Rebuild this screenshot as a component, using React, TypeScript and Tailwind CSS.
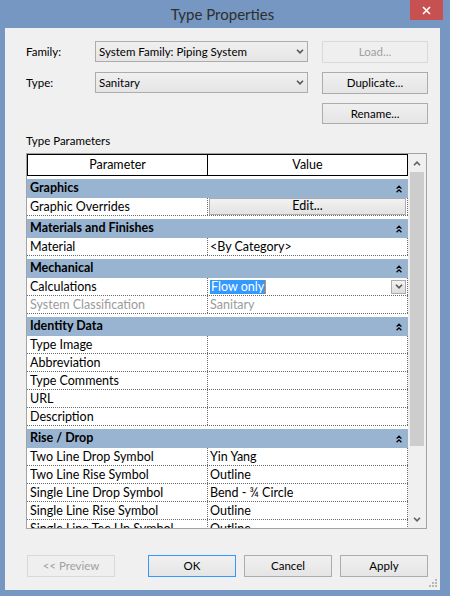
import React from "react";

type Row = { p: string; v?: string; kind?: "button" | "select"; muted?: boolean };
type Group = { name: string; rows: Row[] };

const groups: Group[] = [
  { name: "Graphics", rows: [{ p: "Graphic Overrides", v: "Edit...", kind: "button" }] },
  { name: "Materials and Finishes", rows: [{ p: "Material", v: "<By Category>" }] },
  {
    name: "Mechanical",
    rows: [
      { p: "Calculations", v: "Flow only", kind: "select" },
      { p: "System Classification", v: "Sanitary", muted: true },
    ],
  },
  {
    name: "Identity Data",
    rows: [{ p: "Type Image" }, { p: "Abbreviation" }, { p: "Type Comments" }, { p: "URL" }, { p: "Description" }],
  },
  {
    name: "Rise / Drop",
    rows: [
      { p: "Two Line Drop Symbol", v: "Yin Yang" },
      { p: "Two Line Rise Symbol", v: "Outline" },
      { p: "Single Line Drop Symbol", v: "Bend - ¾ Circle" },
      { p: "Single Line Rise Symbol", v: "Outline" },
      { p: "Single Line Tee Up Symbol", v: "Outline" },
    ],
  },
];

const ChevronDown = ({ className = "" }: { className?: string }) => (
  <svg width="8" height="5" viewBox="0 0 8 5" className={className}>
    <path d="M1 0.8 L4 3.8 L7 0.8" fill="none" stroke="currentColor" strokeWidth="1.6" />
  </svg>
);

const ChevronUp = ({ className = "" }: { className?: string }) => (
  <svg width="8" height="5" viewBox="0 0 8 5" className={className}>
    <path d="M1 4.2 L4 1.2 L7 4.2" fill="none" stroke="currentColor" strokeWidth="1.6" />
  </svg>
);

const Collapse = () => (
  <svg width="6" height="8" viewBox="0 0 6 8">
    <path d="M0.6 3.6 L3 1.2 L5.4 3.6 M0.6 7.2 L3 4.8 L5.4 7.2" fill="none" stroke="#000" strokeWidth="1.3" />
  </svg>
);

function Button({ label, size, state = "normal" }: { label: string; size: string; state?: "normal" | "disabled" | "focused" }) {
  const look =
    state === "disabled"
      ? "border-[#d9d9d9] bg-[#efefef] text-[#a0a0a0]"
      : state === "focused"
      ? "border-[#3399ff] bg-linear-to-b from-[#f0f0f0] to-[#e5e5e5] text-black"
      : "border-[#acacac] bg-linear-to-b from-[#f0f0f0] to-[#e5e5e5] text-black";
  return <div className={`flex items-center justify-center border text-[11.5px] ${size} ${look}`}>{label}</div>;
}

function Combo({ value }: { value: string }) {
  return (
    <div className="flex h-[21px] w-[213px] items-center justify-between border border-[#acacac] bg-linear-to-b from-[#f0f0f0] to-[#e5e5e5] pl-[3px] pr-[3px] text-[11.5px] text-black">
      <span>{value}</span>
      <ChevronDown className="text-[#555]" />
    </div>
  );
}

function DataRow({ row }: { row: Row }) {
  return (
    <div className="flex h-[18px] border-b border-dotted border-[#6a6a6a]">
      <div className={`w-[181px] shrink-0 border-r border-dotted border-[#6a6a6a] pl-[3px] leading-[17px] ${row.muted ? "text-[#9b9b9b]" : "text-black"}`}>
        {row.p}
      </div>
      <div className="flex min-w-0 flex-1 items-center border-r border-dotted border-[#6a6a6a]">
        {row.kind === "button" && (
          <div className="mx-[1px] flex h-[17px] flex-1 items-center justify-center border border-[#acacac] bg-linear-to-b from-[#f2f2f2] to-[#e3e3e3]">
            {row.v}
          </div>
        )}
        {row.kind === "select" && (
          <div className="flex h-full flex-1 items-center pl-[2px] pr-[1px]">
            <span className="bg-[#3399ff] px-[1px] leading-[14px] text-white">{row.v}</span>
            <span className="h-[14px] w-[1px] bg-[#e08a2c]" />
            <div className="ml-auto flex h-[14px] w-[15px] items-center justify-center border border-[#acacac] bg-linear-to-b from-[#f2f2f2] to-[#dedede]">
              <ChevronDown className="text-[#555]" />
            </div>
          </div>
        )}
        {!row.kind && row.v && (
          <span className={`pl-[2px] leading-[17px] ${row.muted ? "text-[#9b9b9b]" : "text-black"}`}>{row.v}</span>
        )}
      </div>
    </div>
  );
}

export default function App() {
  return (
    <div className="relative flex h-[596px] w-[450px] flex-col overflow-hidden bg-[#7597c1] font-['Lato','Liberation_Sans',sans-serif]">
      {/* title bar */}
      <div className="flex h-[28px] shrink-0 items-center justify-center pr-[5px] text-[15px] text-[#2e2e2e]">Type Properties</div>
      <div className="absolute right-[7px] top-0 flex h-[20px] w-[33px] items-center justify-center bg-[#c75050]">
        <svg width="9" height="9" viewBox="0 0 9 9">
          <path d="M1 1 L8 8 M8 1 L1 8" stroke="#fff" strokeWidth="1.6" />
        </svg>
      </div>

      {/* client area */}
      <div className="relative ml-[5px] flex h-[562px] w-[435px] flex-col bg-[#f0f0f0] pl-[21px] pr-[12px] text-[11.5px] text-black">
        <div className="mt-[13px] flex items-start">
          <div className="w-[69px] pt-[2px]">Family:</div>
          <Combo value="System Family: Piping System" />
          <div className="ml-auto">
            <Button label="Load..." size="h-[22px] w-[106px]" state="disabled" />
          </div>
        </div>
        <div className="mt-[9px] flex items-start">
          <div className="w-[69px] pt-[2px]">Type:</div>
          <Combo value="Sanitary" />
          <div className="ml-auto">
            <Button label="Duplicate..." size="h-[22px] w-[106px]" />
          </div>
        </div>
        <div className="mt-[9px] flex justify-end">
          <Button label="Rename..." size="h-[21px] w-[106px]" />
        </div>
        <div className="mt-[9px] h-[16px] leading-[16px]">Type Parameters</div>

        {/* parameters grid */}
        <div className="mt-[4px] flex h-[376px] w-[401px] border border-[#a3a3a3] bg-white text-[12.5px]">
          <div className="flex w-[381px] flex-col overflow-hidden">
            <div className="flex h-[22px] shrink-0 border border-black">
              <div className="flex w-[180px] items-center justify-center border-r border-black">Parameter</div>
              <div className="flex flex-1 items-center justify-center">Value</div>
            </div>
            {groups.map((g) => (
              <div key={g.name} className="shrink-0">
                <div className="mt-[3px] flex h-[19px] items-center justify-between bg-[#99b4d1] pl-[3px] pr-[6px] font-bold">
                  <span>{g.name}</span>
                  <Collapse />
                </div>
                {g.rows.map((r) => (
                  <DataRow key={r.p} row={r} />
                ))}
              </div>
            ))}
          </div>
          {/* scrollbar */}
          <div className="flex w-[18px] flex-col items-center bg-[#f0f0f0]">
            <div className="flex h-[18px] items-center justify-center">
              <ChevronUp className="text-[#606060]" />
            </div>
            <div className="h-[274px] w-[14px] bg-[#cdcdcd]" />
            <div className="flex-1" />
            <div className="flex h-[18px] items-center justify-center">
              <ChevronDown className="text-[#606060]" />
            </div>
          </div>
        </div>

        {/* bottom buttons */}
        <div className="mt-[26px] flex pl-[1px]">
          <Button label="<< Preview" size="h-[22px] w-[88px]" state="disabled" />
          <div className="ml-[33px] flex gap-[8px]">
            <Button label="OK" size="h-[22px] w-[88px]" state="focused" />
            <Button label="Cancel" size="h-[22px] w-[88px]" />
            <Button label="Apply" size="h-[22px] w-[88px]" />
          </div>
        </div>

        <svg className="absolute bottom-[3px] right-[3px]" width="9" height="9" viewBox="0 0 9 9">
          <rect x="7" y="1" width="2" height="2" fill="#b8b8b8" />
          <rect x="4" y="4" width="2" height="2" fill="#b8b8b8" />
          <rect x="7" y="4" width="2" height="2" fill="#b8b8b8" />
          <rect x="1" y="7" width="2" height="2" fill="#b8b8b8" />
          <rect x="4" y="7" width="2" height="2" fill="#b8b8b8" />
          <rect x="7" y="7" width="2" height="2" fill="#b8b8b8" />
        </svg>
      </div>
    </div>
  );
}
